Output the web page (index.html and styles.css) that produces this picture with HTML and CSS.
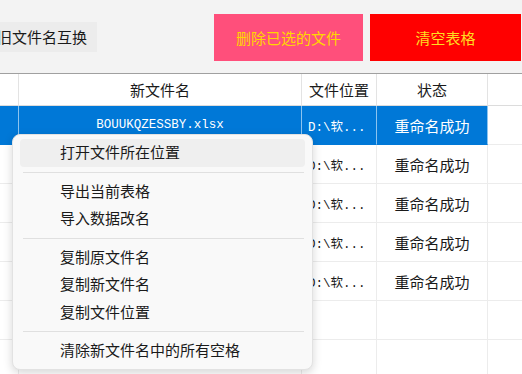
FILE: index.html
```html
<!DOCTYPE html>
<html lang="zh-CN">
<head>
  <meta charset="utf-8">
  <title>批量重命名</title>
  <link rel="stylesheet" href="styles.css">
</head>
<body>
  <div class="toolbar">
    <button class="btn btn-swap">旧文件名互换</button>
    <button class="btn btn-delete">删除已选的文件</button>
    <button class="btn btn-clear">清空表格</button>
  </div>

  <div class="grid">
    <div class="row head">
      <div class="cell"></div>
      <div class="cell">新文件名</div>
      <div class="cell">文件位置</div>
      <div class="cell">状态</div>
      <div class="cell"></div>
    </div>
    <div class="row sel">
      <div class="cell"></div>
      <div class="cell mono">BOUUKQZESSBY.xlsx</div>
      <div class="cell mono path">D:\软...</div>
      <div class="cell">重命名成功</div>
      <div class="cell"></div>
    </div>
    <div class="row">
      <div class="cell"></div>
      <div class="cell mono"></div>
      <div class="cell mono path">D:\软...</div>
      <div class="cell">重命名成功</div>
      <div class="cell"></div>
    </div>
    <div class="row">
      <div class="cell"></div>
      <div class="cell mono"></div>
      <div class="cell mono path">D:\软...</div>
      <div class="cell">重命名成功</div>
      <div class="cell"></div>
    </div>
    <div class="row">
      <div class="cell"></div>
      <div class="cell mono"></div>
      <div class="cell mono path">D:\软...</div>
      <div class="cell">重命名成功</div>
      <div class="cell"></div>
    </div>
    <div class="row">
      <div class="cell"></div>
      <div class="cell mono"></div>
      <div class="cell mono path">D:\软...</div>
      <div class="cell">重命名成功</div>
      <div class="cell"></div>
    </div>
    <div class="row">
      <div class="cell"></div><div class="cell"></div><div class="cell"></div><div class="cell"></div><div class="cell"></div>
    </div>
    <div class="row">
      <div class="cell"></div><div class="cell"></div><div class="cell"></div><div class="cell"></div><div class="cell"></div>
    </div>
  </div>

  <!-- right-click menu over the table -->
  <div class="context-menu">
    <div class="menu-item hover">打开文件所在位置</div>
    <div class="menu-sep"></div>
    <div class="menu-item">导出当前表格</div>
    <div class="menu-item">导入数据改名</div>
    <div class="menu-sep"></div>
    <div class="menu-item">复制原文件名</div>
    <div class="menu-item">复制新文件名</div>
    <div class="menu-item">复制文件位置</div>
    <div class="menu-sep"></div>
    <div class="menu-item">清除新文件名中的所有空格</div>
  </div>
</body>
</html>
```

FILE: styles.css
```css
body {
  margin: 0;
  background: #f3f3f3;
  font-family: "Noto Sans CJK SC", sans-serif;
  font-size: 15px;
  color: #1a1a1a;
  overflow: hidden;
}

.toolbar {
  display: flex;
  align-items: flex-start;
  height: 73px;
}

.btn {
  border: none;
  padding: 0;
  font-family: "Noto Sans CJK SC", sans-serif;
  font-size: 15px;
  line-height: 20px;
  cursor: pointer;
}

.btn-swap {
  margin-top: 22px;
  margin-left: -8px;
  width: 105px;
  height: 30px;
  padding-left: 5px;
  text-align: left;
  background: #ececec;
  color: #1a1a1a;
}

.btn-delete {
  margin-top: 14px;
  margin-left: auto;
  width: 149px;
  height: 47px;
  background: #ff4f7b;
  color: #ffd700;
}

.btn-clear {
  margin-top: 14px;
  margin-left: 7px;
  margin-right: 1px;
  width: 151px;
  height: 47px;
  background: #ff0000;
  color: #ffdd22;
}

.grid {
  background: #fff;
  border-top: 1px solid #a0a0a0;
}

.row {
  display: grid;
  grid-template-columns: 19px 283px 75px 111px 1fr;
  height: 39px;
}

.row.head {
  height: 32px;
}

.cell {
  box-sizing: border-box;
  border-right: 1px solid #ececec;
  border-bottom: 1px solid #ececec;
  display: flex;
  align-items: center;
  justify-content: center;
  white-space: nowrap;
  overflow: hidden;
}

.head .cell {
  border-right-color: #e3e3e3;
  border-bottom-color: #dcdcdc;
}

.cell:last-child {
  border-right: none;
}

.mono {
  font-family: "Liberation Mono", "Noto Sans CJK SC", monospace;
  font-size: 12.5px;
}

.path {
  justify-content: flex-start;
  padding-left: 6px;
}

.sel .cell:nth-child(-n+4) {
  background: #0078d7;
  color: #fff;
  border-right-color: #8cc4ef;
  border-bottom-color: #0078d7;
}

.context-menu {
  position: absolute;
  left: 12px;
  top: 134px;
  width: 301px;
  box-sizing: border-box;
  padding: 4px 0;
  background: #f9f9f9;
  border: 1px solid #e2e2e2;
  border-radius: 8px;
  box-shadow: 0 3px 10px rgba(0, 0, 0, 0.16);
}

.menu-item {
  height: 25.5px;
  line-height: 25.5px;
  padding-bottom: 2px;
  margin: 0 7px;
  padding-left: 40px;
  border-radius: 4px;
}

.menu-item.hover {
  background: #efefef;
}

.menu-sep {
  height: 1px;
  margin: 5px 8px 5px 10px;
  background: #e0e0e0;
}
```
